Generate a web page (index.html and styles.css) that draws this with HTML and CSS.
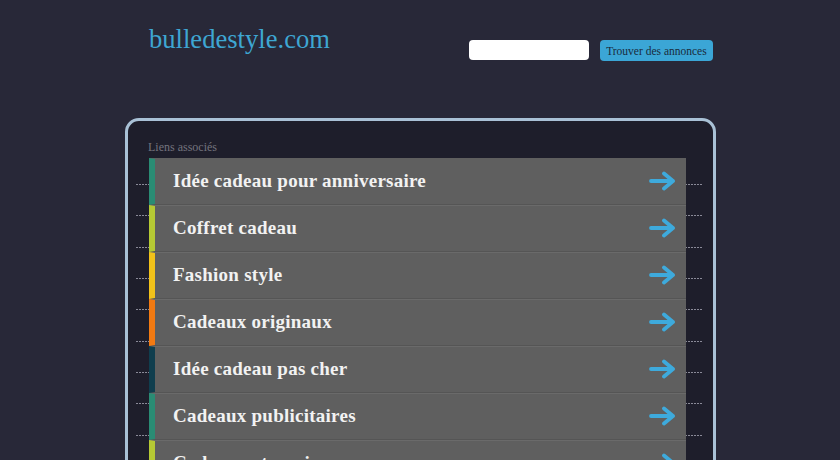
FILE: index.html
```html
<!DOCTYPE html>
<html lang="fr">
<head>
<meta charset="utf-8">
<title>bulledestyle.com</title>
<link rel="stylesheet" href="styles.css">
</head>
<body>
<div class="wrap">
  <header class="header">
    <div class="logo">bulledestyle.com</div>
    <form class="search">
      <input class="search-input" type="text">
      <button class="search-btn" type="button">Trouver des annonces</button>
    </form>
  </header>
  <section class="panel">
    <div class="panel-title">Liens associés</div>
    <div class="list">
      <a class="row c-teal" href="#"><span class="label">Idée cadeau pour anniversaire</span><svg class="arrow" viewBox="0 0 28 20"><path d="M2 10H24M15 2.5L24 10L15 17.5"/></svg></a>
      <a class="row c-lime" href="#"><span class="label">Coffret cadeau</span><svg class="arrow" viewBox="0 0 28 20"><path d="M2 10H24M15 2.5L24 10L15 17.5"/></svg></a>
      <a class="row c-yellow" href="#"><span class="label">Fashion style</span><svg class="arrow" viewBox="0 0 28 20"><path d="M2 10H24M15 2.5L24 10L15 17.5"/></svg></a>
      <a class="row c-orange" href="#"><span class="label">Cadeaux originaux</span><svg class="arrow" viewBox="0 0 28 20"><path d="M2 10H24M15 2.5L24 10L15 17.5"/></svg></a>
      <a class="row c-dark" href="#"><span class="label">Idée cadeau pas cher</span><svg class="arrow" viewBox="0 0 28 20"><path d="M2 10H24M15 2.5L24 10L15 17.5"/></svg></a>
      <a class="row c-teal" href="#"><span class="label">Cadeaux publicitaires</span><svg class="arrow" viewBox="0 0 28 20"><path d="M2 10H24M15 2.5L24 10L15 17.5"/></svg></a>
      <a class="row c-lime" href="#"><span class="label">Cadeau entreprise</span><svg class="arrow" viewBox="0 0 28 20"><path d="M2 10H24M15 2.5L24 10L15 17.5"/></svg></a>
    </div>
  </section>
</div>
</body>
</html>
```

FILE: styles.css
```css
html, body {
  margin: 0;
  padding: 0;
  background: #282838;
  font-family: "Liberation Serif", "Times New Roman", serif;
}

.wrap {
  width: 591px;
  margin-left: 125px;
}

.header {
  display: flex;
  align-items: flex-start;
  height: 118px;
}

.logo {
  margin-left: 24px;
  margin-top: 22px;
  font-size: 26.6px;
  line-height: 34px;
  color: #3ea6d2;
}

.search {
  display: flex;
  align-items: flex-start;
  margin: 40px 0 0 139px;
}

.search-input {
  width: 120px;
  height: 20px;
  box-sizing: border-box;
  border: none;
  border-radius: 4px;
  background: #ffffff;
  padding: 0;
  margin: 0;
}

.search-btn {
  margin-left: 11px;
  width: 113px;
  height: 21px;
  box-sizing: border-box;
  border: none;
  border-radius: 4px;
  background: #3ba6d6;
  color: #1a2c3c;
  font-family: "Liberation Serif", "Times New Roman", serif;
  font-size: 11.5px;
  padding: 0;
}

.panel {
  border: 3px solid #a9c1d6;
  border-radius: 14px;
  background: #1e1e2b;
  padding: 19px 27px 0 21px;
  height: 400px;
  box-sizing: border-box;
}

.panel-title {
  font-size: 12px;
  line-height: 14px;
  color: #74747e;
  margin-left: -1px;
  margin-bottom: 4px;
}

.list {
  position: relative;
  display: flex;
  flex-direction: column;
}

.list::before {
  content: "";
  position: absolute;
  top: 0;
  bottom: 0;
  left: -13px;
  right: -17px;
  background: repeating-linear-gradient(to bottom, transparent 0 26px, #8a8a98 26px 27px, transparent 27px 31.33px);
  -webkit-mask-image: repeating-linear-gradient(to right, #000 0 2px, transparent 2px 3px);
  mask-image: repeating-linear-gradient(to right, #000 0 2px, transparent 2px 3px);
}

.row {
  position: relative;
  display: flex;
  align-items: center;
  height: 47px;
  box-sizing: border-box;
  background: #5f5f5f;
  border-top: 1px solid #6a6a6a;
  border-bottom: 1px solid #555555;
  border-left: 6px solid #2a8c74;
  padding: 0 9px 1px 18px;
  text-decoration: none;
}

.row:first-child {
  border-top-color: #5f5f5f;
}

.label {
  flex: 1;
  font-size: 19px;
  font-weight: bold;
  color: #f2f2f2;
  letter-spacing: 0.25px;
}

.arrow {
  width: 28px;
  height: 20px;
  fill: none;
  stroke: #3eaadc;
  stroke-width: 3.8;
  stroke-linecap: round;
  stroke-linejoin: round;
}

.c-teal { border-left-color: #2a8c74; }
.c-lime { border-left-color: #b5c934; }
.c-yellow { border-left-color: #f2c21a; }
.c-orange { border-left-color: #f27a12; }
.c-dark { border-left-color: #0f3e4e; }
```
